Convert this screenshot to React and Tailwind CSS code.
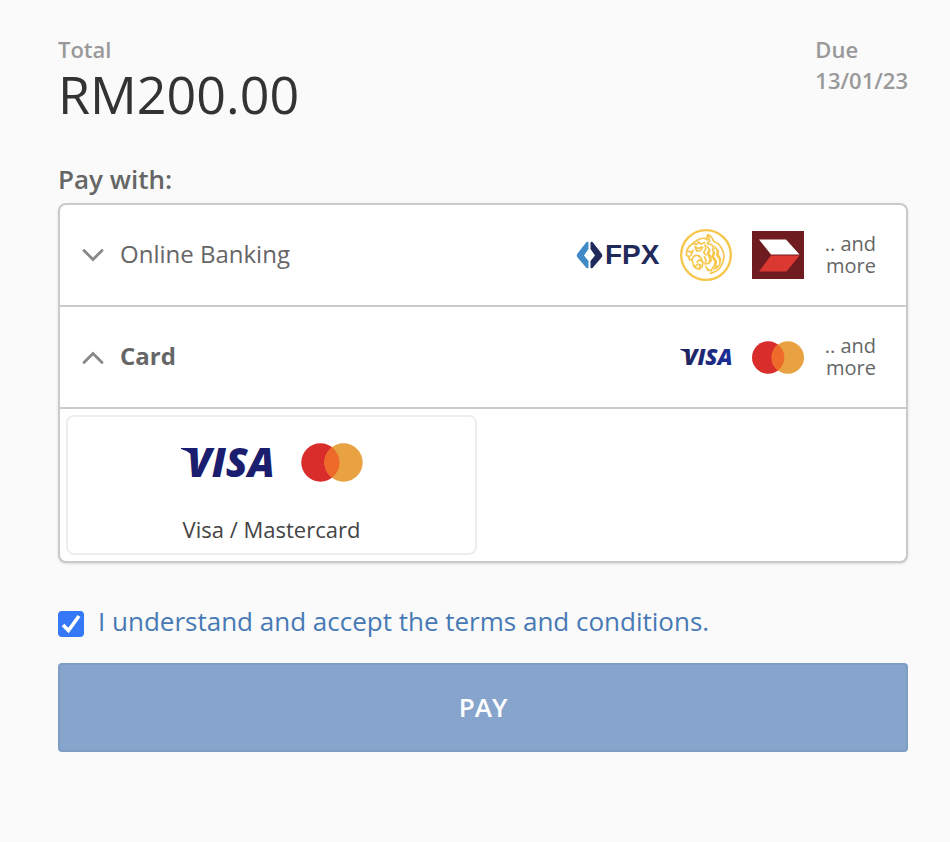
import React, { useState } from 'react';

const FpxLogo = () => (
  <svg viewBox="0 0 84 30" className="w-[84px] h-[30px] shrink-0 overflow-visible" role="img" aria-label="FPX">
    <path d="M10.5 2 Q12.5 1 12.5 3 V9 L8 15.500 L12.500 21 V27 Q12.500 29 10.500 28 L1.500 17.500 Q0 15.500 1.500 13.500 Z" fill="#4189c7" />
    <path d="M16.500 2 Q14.500 1 14.500 3 V9 L19 15.500 L14.500 21 V27 Q14.500 29 16.500 28 L25.500 17.500 Q27 15.500 25.500 13.500 Z" fill="#1f2a5a" />
    <text x="29" y="24" className="font-['Liberation_Sans'] font-bold text-[28px]" fill="#1f2a5a">FPX</text>
  </svg>
);

const TigerLogo = () => (
  <svg viewBox="30 21 156 156" className="size-[52px] shrink-0" fill="none" stroke="#f6c74c" strokeLinecap="round" strokeLinejoin="round" role="img" aria-label="Maybank">
    <circle cx="108" cy="99" r="74.500" strokeWidth="7" />
    <g strokeWidth="5">
      <path d="M50 88 Q54 74 64 68 L78 57 Q90 47 104 49 L113 54" />
      <path d="M110 52 L113 38 Q121 39 125 46 L131 58 Q145 63 152 74 Q163 90 162 106 Q160 124 150 137 Q140 149 121 154" />
      <path d="M116 44 L119 57 L112 65 L125 68 L132 80" />
      <path d="M50 88 L49 99 L57 105 L63 99 L67 91" />
      <path d="M53 87 L63 91 L70 85" />
      <path d="M57 105 L58 114 L66 112 Q70 101 78 100 Q88 99 94 109 L96 118" />
      <path d="M66 112 L69 126 Q73 134 78 132 L84 126 L91 129 L88 139 Q77 143 70 130" />
      <path d="M81 120 L89 113 L99 120 L97 133 L88 142" />
      <path d="M75 74 L84 79 L98 75 L91 86 L80 87 Z" />
      <path d="M70 66 L80 67 L86 60 L93 66 L104 62" />
      <path d="M105 69 L108 80 L101 91 L108 99" />
      <path d="M103 104 L108 115 L105 126 L117 124 L125 114" />
    </g>
    <g fill="#f6c74c" strokeWidth="3">
      <path d="M112 72 L121 84 L117 94 L125 106 L117 121 L118 107 L111 94 L116 84 Z" />
      <path d="M128 80 L135 95 L131 103 L140 117 L138 131 L123 143 L133 129 L134 118 L125 104 L129 94 Z" />
      <path d="M134 72 L146 87 L146 99 L153 112 L149 128 L148 113 L140 101 L141 88 Z" />
      <path d="M107 132 L115 142 L127 147 L113 146 Z" />
      <path d="M137 135 L150 127 L143 137 L130 143 Z" />
    </g>
  </svg>
);

const CimbLogo = () => (
  <svg viewBox="0 0 52 48" className="w-[52px] h-12 shrink-0" role="img" aria-label="CIMB">
    <rect width="52" height="48" fill="#6f1c20" />
    <path d="M7 8.500 H34 L47.500 23.500 H19 Z" fill="#fff" />
    <path d="M19 24.500 H47.500 L34.500 40.500 H7 Z" fill="#db3832" />
  </svg>
);

const VisaLogo = ({ className, gradient }) => (
  <svg viewBox="0 0 92 34" className={className} role="img" aria-label="Visa">
    <linearGradient id="visa-blue" gradientUnits="userSpaceOnUse" x1="0" y1="0" x2="92" y2="0">
      <stop offset="0" stopColor="#1f2257" />
      <stop offset="1" stopColor="#1c2f9b" />
    </linearGradient>
    <g fill={gradient ? 'url(#visa-blue)' : '#1b1e6f'}>
      <path d="M0 2 H14 L17 18 Q12 6 0 3 Z" />
      <text x="6" y="31" className="font-['Open_Sans'] font-extrabold italic text-[40px]">VISA</text>
    </g>
  </svg>
);

const MastercardLogo = ({ className }) => (
  <svg viewBox="0 0 52 33" className={className} role="img" aria-label="Mastercard">
    <circle cx="16.200" cy="16.500" r="16.200" fill="#d92d2b" />
    <circle cx="35.800" cy="16.500" r="16.200" fill="#e9a242" />
    <path d="M26 3.600 A16.200 16.200 0 0 1 26 29.400 A16.200 16.200 0 0 1 26 3.600 Z" fill="#ee6a2b" />
  </svg>
);

const Chevron = ({ open }) => (
  <svg viewBox="0 0 22 14" className="w-[22px] h-[14px] shrink-0" fill="none" stroke="#888" strokeWidth="2.800" strokeLinecap="round">
    <path d={open ? 'M2 12.500 L11 3.500 L20 12.500' : 'M2 2.500 L11 11.500 L20 2.500'} />
  </svg>
);

const MethodRow = ({ label, open, onClick, children }) => (
  <button
    type="button"
    aria-expanded={open}
    onClick={onClick}
    className="flex w-full h-[102px] items-center pl-[22px] pr-[30px] text-left text-[#666]"
  >
    <Chevron open={open} />
    <span className={open ? 'ml-4 pb-[2px] text-2xl font-bold' : 'ml-4 pb-[2px] text-2xl'}>{label}</span>
    <span className="ml-auto flex items-center gap-5">
      {children}
      <span className="w-[52px] text-right text-xl leading-[22px]">.. and more</span>
    </span>
  </button>
);

const App = () => {
  const [method, setMethod] = useState('card');
  const [accepted, setAccepted] = useState(true);

  const toggle = (name) => setMethod(method === name ? '' : name);

  return (
    <div className="min-h-screen bg-[#fafafa] pt-[34px] pb-[90px] pl-[58px] pr-[42px] font-['Open_Sans',sans-serif]">
      {/* Amount and due date */}
      <header className="flex justify-between">
        <div>
          <p className="text-[22px] leading-[30px] font-semibold text-[#999]">Total</p>
          <p className="text-[52px] leading-[60px] text-[#333]">RM200.00</p>
        </div>
        <div className="text-[22px] leading-[31px] font-semibold text-[#999]">
          <p>Due</p>
          <p>13/01/23</p>
        </div>
      </header>

      <h2 className="mt-[37px] text-[26px] leading-9 font-semibold text-[#666]">Pay with:</h2>

      {/* Payment methods */}
      <section className="mt-[6px] rounded-lg border-2 border-[#cacaca] bg-white shadow-sm divide-y-2 divide-[#cacaca]">
        <MethodRow label="Online Banking" open={method === 'bank'} onClick={() => toggle('bank')}>
          <FpxLogo />
          <TigerLogo />
          <CimbLogo />
        </MethodRow>
        <MethodRow label="Card" open={method === 'card'} onClick={() => toggle('card')}>
          <VisaLogo className="w-[52px] h-[19px] overflow-visible" gradient />
          <MastercardLogo className="w-[52px] h-[33px]" />
        </MethodRow>
        {method === 'card' && (
          <div className="grid grid-cols-2 gap-3 p-[6px]">
            <button
              type="button"
              className="flex h-[140px] flex-col items-center justify-between rounded-lg border-2 border-[#ededed] pt-[26px] pb-[9px] text-[#444]"
            >
              <span className="flex items-center gap-7">
                <VisaLogo className="w-[92px] h-[34px] overflow-visible" />
                <MastercardLogo className="w-[62px] h-[39px]" />
              </span>
              <span className="text-[22px] leading-[30px]">Visa / Mastercard</span>
            </button>
          </div>
        )}
      </section>

      <div className="mt-[42px] flex items-end gap-[14px]">
        <span className="relative size-[26px] shrink-0">
          <input
            id="terms"
            type="checkbox"
            checked={accepted}
            onChange={(e) => setAccepted(e.target.checked)}
            className="peer block size-[26px] appearance-none rounded border-2 border-[#999] bg-white checked:border-[#3478f6] checked:bg-[#3478f6]"
          />
          <svg viewBox="0 0 26 26" className="pointer-events-none absolute inset-0 hidden peer-checked:block" fill="none" stroke="#fff" strokeWidth="3.600">
            <path d="M5 14 L10.500 19.500 L21 5" />
          </svg>
        </span>
        <label htmlFor="terms" className="text-[26px] leading-8 text-[#4779b5]">
          I understand and accept the terms and conditions.
        </label>
      </div>

      <button
        type="button"
        disabled={!accepted}
        className="mt-[26px] h-[89px] w-full rounded border-2 border-[#7d9dc3] bg-[#87a5cc] text-[26px] font-semibold text-white"
      >
        PAY
      </button>
    </div>
  );
};

export default App;
